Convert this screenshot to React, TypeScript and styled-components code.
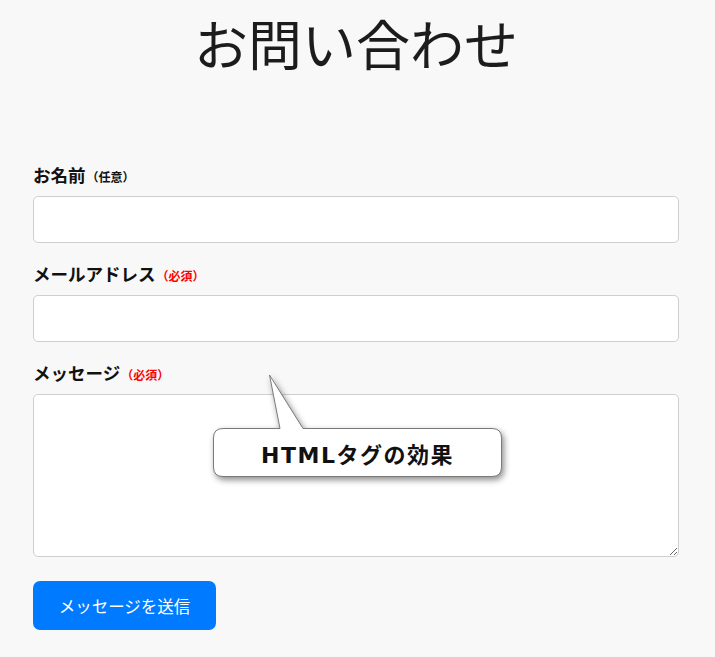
import React from "react";
import styled, { createGlobalStyle } from "styled-components";

const Global = createGlobalStyle`
  html, body { margin: 0; padding: 0; background: #f8f8f8; }
  body { font-family: "Noto Sans CJK JP", "Noto Sans", sans-serif; color: #212529; }
  * { box-sizing: border-box; }
`;

const Page = styled.div`
  position: relative;
  width: 715px;
  min-height: 657px;
  padding: 0 36px 0 33px;
`;

const Title = styled.h1`
  margin: 0;
  padding-top: 7px;
  height: 150px;
  text-align: center;
  font-size: 54px;
  font-weight: 400;
  line-height: 72px;
  color: #1c1c1c;
`;

const Form = styled.form`
  display: flex;
  flex-direction: column;
`;

const Field = styled.div<{ $first?: boolean }>`
  display: flex;
  flex-direction: column;
  margin-top: ${(p) => (p.$first ? "13px" : "19px")};
`;

const Label = styled.label`
  display: block;
  font-size: 17.5px;
  font-weight: 700;
  line-height: 24px;
  height: 24px;
  color: #111;
  margin-bottom: 9px;
`;

const Tag = styled.span<{ $required?: boolean }>`
  font-size: 12px;
  font-weight: 700;
  color: ${(p) => (p.$required ? "#ff0000" : "#111")};
  margin-left: 1px;
`;

const Input = styled.input`
  display: block;
  width: 100%;
  height: 47px;
  border: 1px solid #cfcfcf;
  border-radius: 5px;
  background: #fff;
  font-size: 16px;
  padding: 6px 12px;
  outline: none;
`;

const TextArea = styled.textarea`
  width: 100%;
  height: 163px;
  border: 1px solid #cfcfcf;
  border-radius: 5px;
  background: #fff;
  font-size: 16px;
  padding: 6px 12px;
  outline: none;
  resize: both;
  display: block;
`;

const Button = styled.button`
  margin-top: 24px;
  align-self: flex-start;
  width: 183px;
  height: 49px;
  border: none;
  border-radius: 7px;
  background: #007bff;
  color: #fff;
  font-family: "Noto Sans CJK JP", "Noto Sans", sans-serif;
  font-size: 16.5px;
  font-weight: 400;
  cursor: pointer;
`;

const Callout = styled.div`
  position: absolute;
  left: 205px;
  top: 368px;
  width: 310px;
  height: 125px;
  pointer-events: none;
`;

const CalloutShape = styled.svg`
  position: absolute;
  inset: 0;
  overflow: visible;
  filter: drop-shadow(2px 3px 3px rgba(0, 0, 0, 0.45));
`;

const CalloutText = styled.div`
  position: absolute;
  left: 8px;
  top: 60px;
  width: 289px;
  height: 49px;
  display: flex;
  align-items: center;
  justify-content: center;
  font-family: "DejaVu Sans", "Noto Sans CJK JP", sans-serif;
  font-size: 22px;
  font-weight: 700;
  color: #111;
  letter-spacing: 1.5px;
`;

export default function App() {
  return (
    <>
      <Global />
      <Page>
        <Title>お問い合わせ</Title>
        <Form onSubmit={(e) => e.preventDefault()}>
          <Field $first>
            <Label>
              お名前<Tag>（任意）</Tag>
            </Label>
            <Input type="text" />
          </Field>
          <Field>
            <Label>
              メールアドレス<Tag $required>（必須）</Tag>
            </Label>
            <Input type="email" />
          </Field>
          <Field>
            <Label>
              メッセージ<Tag $required>（必須）</Tag>
            </Label>
            <TextArea />
          </Field>
          <Button type="submit">メッセージを送信</Button>
        </Form>
        <Callout>
          <CalloutShape width="310" height="125" viewBox="0 0 310 125">
            <path
              d="M 18 60.5 H 75 L 64.5 7 L 98 60.5 H 287 Q 296.5 60.5 296.5 70 V 99 Q 296.5 108.5 287 108.5 H 18 Q 8.5 108.5 8.5 99 V 70 Q 8.5 60.5 18 60.5 Z"
              fill="#ffffff"
              stroke="#7a7a7a"
              strokeWidth="1"
            />
          </CalloutShape>
          <CalloutText>HTMLタグの効果</CalloutText>
        </Callout>
      </Page>
    </>
  );
}
